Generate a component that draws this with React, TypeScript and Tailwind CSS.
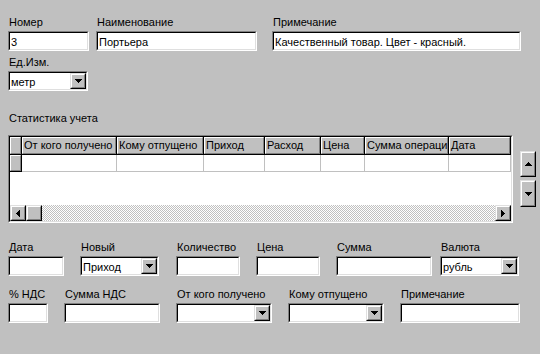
import React from "react";

const raisedOuter =
  "border border-t-[#dfdfdf] border-l-[#dfdfdf] border-r-black border-b-black bg-[#c0c0c0]";
const raisedInner =
  "h-full w-full flex items-center justify-center border border-t-white border-l-white border-r-[#808080] border-b-[#808080]";

function Raised({ className, children }: { className: string; children?: React.ReactNode }) {
  return (
    <div className={`${raisedOuter} ${className} shrink-0`}>
      <div className={raisedInner}>{children}</div>
    </div>
  );
}

function ArrowDown() {
  return (
    <svg width="7" height="4" viewBox="0 0 7 4" shapeRendering="crispEdges">
      <path d="M0 0h7v1h-1v1h-1v1h-1v1h-1v-1h-1v-1h-1v-1h-1z" fill="#000" />
    </svg>
  );
}
function ArrowUp() {
  return (
    <svg width="7" height="4" viewBox="0 0 7 4" shapeRendering="crispEdges">
      <path d="M3 0h1v1h1v1h1v1h1v1h-7v-1h1v-1h1v-1h1z" fill="#000" />
    </svg>
  );
}
function ArrowLeft() {
  return (
    <svg width="4" height="7" viewBox="0 0 4 7" shapeRendering="crispEdges">
      <path d="M3 0h1v7h-1v-1h-1v-1h-1v-1h-1v-1h1v-1h1v-1h1z" fill="#000" />
    </svg>
  );
}
function ArrowRight() {
  return (
    <svg width="4" height="7" viewBox="0 0 4 7" shapeRendering="crispEdges">
      <path d="M0 0h1v1h1v1h1v1h1v1h-1v1h-1v1h-1v1h-1z" fill="#000" />
    </svg>
  );
}

function Sunken({ w, value, combo }: { w: string; value?: string; combo?: boolean }) {
  return (
    <div
      className={`h-[20px] border border-t-[#808080] border-l-[#808080] border-r-white border-b-white ${w}`}
    >
      <div className="h-full flex border border-t-black border-l-black border-r-[#dfdfdf] border-b-[#dfdfdf] bg-white">
        <div className="flex-1 min-w-0 pl-[1px] pt-[2px] leading-[14px] whitespace-nowrap overflow-hidden">
          {value}
        </div>
        {combo && (
          <Raised className="w-[16px] h-[16px]">
            <ArrowDown />
          </Raised>
        )}
      </div>
    </div>
  );
}

function Field({
  label,
  w,
  value,
  combo,
  ml = "",
}: {
  label: string;
  w: string;
  value?: string;
  combo?: boolean;
  ml?: string;
}) {
  return (
    <div className={`flex flex-col ${ml}`}>
      <div className="h-[16px] leading-[15px] pl-[1px] whitespace-nowrap">{label}</div>
      <Sunken w={w} value={value} combo={combo} />
    </div>
  );
}

const columns: { title: string; w: string }[] = [
  { title: "От кого получено", w: "w-[95px]" },
  { title: "Кому отпущено", w: "w-[87px]" },
  { title: "Приход", w: "w-[61px]" },
  { title: "Расход", w: "w-[56px]" },
  { title: "Цена", w: "w-[44px]" },
  { title: "Сумма операци", w: "w-[84px]" },
  { title: "Дата", w: "w-[62px]" },
];

function HeaderCell({ w, children }: { w: string; children?: React.ReactNode }) {
  return (
    <div className={`${w} h-full shrink-0 border-r border-b border-r-black border-b-black bg-[#c0c0c0]`}>
      <div className="h-full border border-t-white border-l-white border-r-[#808080] border-b-[#808080] pl-[1px] leading-[15px] whitespace-nowrap overflow-hidden">
        {children}
      </div>
    </div>
  );
}

function Grid() {
  return (
    <div className="w-[505px] h-[88px] shrink-0 border border-t-[#808080] border-l-[#808080] border-r-white border-b-white">
      <div className="h-full flex flex-col border border-t-black border-l-black border-r-[#dfdfdf] border-b-[#dfdfdf] bg-white overflow-hidden">
        <div className="flex h-[18px] shrink-0">
          <HeaderCell w="w-[12px]" />
          {columns.map((c) => (
            <HeaderCell key={c.title} w={c.w}>
              {c.title}
            </HeaderCell>
          ))}
        </div>
        <div className="flex h-[17px] shrink-0">
          <HeaderCell w="w-[12px]" />
          {columns.map((c) => (
            <div key={c.title} className={`${c.w} h-full shrink-0 border-r border-b border-[#c0c0c0]`} />
          ))}
        </div>
        <div className="flex-1" />
        <div className="flex h-[16px] shrink-0">
          <Raised className="w-[16px] h-[16px]">
            <ArrowLeft />
          </Raised>
          <Raised className="w-[16px] h-[16px]" />
          <div className="flex-1 [background-image:repeating-conic-gradient(#c0c0c0_0_25%,#ffffff_0_50%)] [background-size:2px_2px]" />
          <Raised className="w-[16px] h-[16px]">
            <ArrowRight />
          </Raised>
        </div>
      </div>
    </div>
  );
}

export default function App() {
  return (
    <div className="w-[540px] h-[354px] bg-[#c0c0c0] text-[11px] text-black overflow-hidden pl-[8px] pt-[15px] font-['Liberation_Sans',Arial,sans-serif]">
      <div className="flex">
        <Field label="Номер" w="w-[81px]" value="3" />
        <Field label="Наименование" w="w-[161px]" value="Портьера" ml="ml-[7px]" />
        <Field
          label="Примечание"
          w="w-[249px]"
          value="Качественный товар. Цвет - красный."
          ml="ml-[15px]"
        />
      </div>
      <div className="flex mt-[4px]">
        <Field label="Ед.Изм." w="w-[80px]" value="метр" combo />
      </div>
      <div className="mt-[20px] h-[16px] leading-[15px] pl-[1px]">Статистика учета</div>
      <div className="flex mt-[8px] items-start">
        <Grid />
        <div className="flex flex-col ml-[7px] mt-[16px] gap-[3px]">
          <Raised className="w-[16px] h-[26px]">
            <ArrowUp />
          </Raised>
          <Raised className="w-[16px] h-[27px]">
            <ArrowDown />
          </Raised>
        </div>
      </div>
      <div className="flex mt-[17px]">
        <Field label="Дата" w="w-[56px]" />
        <Field label="Новый" w="w-[79px]" value="Приход" combo ml="ml-[16px]" />
        <Field label="Количество" w="w-[64px]" ml="ml-[17px]" />
        <Field label="Цена" w="w-[64px]" ml="ml-[16px]" />
        <Field label="Сумма" w="w-[96px]" ml="ml-[16px]" />
        <Field label="Валюта" w="w-[79px]" value="рубль" combo ml="ml-[8px]" />
      </div>
      <div className="flex mt-[11px]">
        <Field label="% НДС" w="w-[40px]" />
        <Field label="Сумма НДС" w="w-[96px]" ml="ml-[16px]" />
        <Field label="От кого получено" w="w-[96px]" combo ml="ml-[16px]" />
        <Field label="Кому отпущено" w="w-[96px]" combo ml="ml-[16px]" />
        <Field label="Примечание" w="w-[120px]" ml="ml-[16px]" />
      </div>
    </div>
  );
}
